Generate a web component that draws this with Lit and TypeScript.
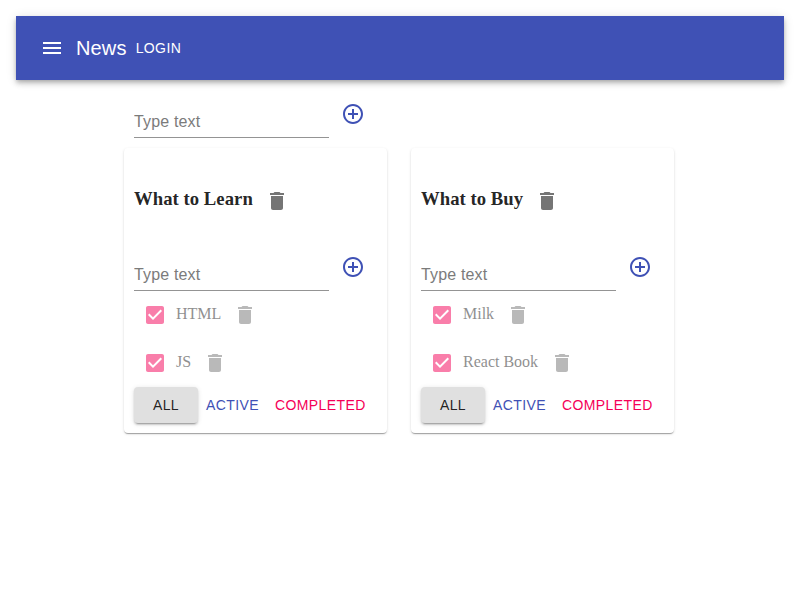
import { LitElement, html, css } from "lit";
import { customElement, property } from "lit/decorators.js";

const icon = (d: string) => html`<svg viewBox="0 0 24 24" aria-hidden="true"><path d=${d}></path></svg>`;
const MENU = "M3 18h18v-2H3v2zm0-5h18v-2H3v2zm0-7v2h18V6H3z";
const ADD = "M13 7h-2v4H7v2h4v4h2v-4h4v-2h-4V7zm-1-5C6.48 2 2 6.48 2 12s4.48 10 10 10 10-4.48 10-10S17.52 2 12 2zm0 18c-4.41 0-8-3.59-8-8s3.59-8 8-8 8 3.59 8 8-3.59 8-8 8z";
const TRASH = "M6 19c0 1.1.9 2 2 2h8c1.1 0 2-.9 2-2V7H6v12zM19 4h-3.5l-1-1h-5l-1 1H5v2h14V4z";
const CHECK = "M19 3H5c-1.11 0-2 .9-2 2v14c0 1.1.89 2 2 2h14c1.11 0 2-.9 2-2V5c0-1.1-.89-2-2-2zm-9 14l-5-5 1.41-1.41L10 14.17l7.59-7.59L19 8l-9 9z";

const shared = css`
  * { box-sizing: border-box; }
  svg { display: block; width: 24px; height: 24px; fill: currentColor; flex: none; }
  button { border: 0; margin: 0; background: none; color: inherit; font: inherit; padding: 0; cursor: pointer; }
`;

@customElement("add-item-form")
export class AddItemForm extends LitElement {
  static styles = [shared, css`
    :host { display: flex; height: 48px; }
    input {
      width: 195px; height: 48px; padding: 22px 0 6px; border: 0; border-bottom: 1px solid #949494;
      outline: 0; background: none; font: 16px/19px "Liberation Sans", Arial, sans-serif;
      letter-spacing: 0.15px; color: rgba(0, 0, 0, 0.87);
    }
    input::placeholder { color: #7b7b7b; opacity: 1; }
    button { width: 48px; height: 48px; padding: 12px; color: #3f51b5; }
  `];
  render() {
    return html`<input placeholder="Type text"><button aria-label="Add">${icon(ADD)}</button>`;
  }
}

@customElement("todo-list")
export class TodoList extends LitElement {
  @property() heading = "";
  @property({ attribute: false }) tasks: string[] = [];
  static styles = [shared, css`
    :host {
      display: block; box-sizing: border-box; width: 263px; height: 285px; padding: 10px; border-radius: 4px; background: #fff;
      box-shadow: 0 2px 1px -1px rgba(0,0,0,.2), 0 1px 1px 0 rgba(0,0,0,.14), 0 1px 3px 0 rgba(0,0,0,.12);
      font: 16px "Liberation Serif", "Times New Roman", serif;
    }
    h3 { display: flex; align-items: center; height: 48px; margin: 19px 0 18px; font-size: 18.72px; line-height: 22px; letter-spacing: .03px; color: rgba(0,0,0,.87); }
    h3 span { padding-bottom: 4px; }
    .remove { padding: 12px; color: #757575; }
    .task { display: flex; align-items: center; height: 48px; opacity: .5; color: #212121; }
    .task span { padding-bottom: 2px; }
    .check { padding: 9px; color: #f50057; }
    .filters { display: flex; height: 36px; font: 500 14px/24px "Liberation Sans", Arial, sans-serif; letter-spacing: .4px; }
    .filters button { padding: 6px 8px; min-width: 64px; border-radius: 4px; letter-spacing: inherit; color: #3f51b5; white-space: nowrap; }
    .filters .all {
      background: #e0e0e0; color: rgba(0,0,0,.87);
      box-shadow: 0 3px 1px -2px rgba(0,0,0,.2), 0 2px 2px 0 rgba(0,0,0,.14), 0 1px 5px 0 rgba(0,0,0,.12);
    }
    .filters .completed { color: #f50057; }
  `];
  render() {
    return html`
      <h3><span>${this.heading}</span><button class="remove" aria-label="Delete list">${icon(TRASH)}</button></h3>
      <add-item-form></add-item-form>
      <div>${this.tasks.map(t => html`<div class="task">
        <button class="check" role="checkbox" aria-checked="true" aria-label=${t}>${icon(CHECK)}</button>
        <span>${t}</span><button class="remove" aria-label="Delete task">${icon(TRASH)}</button></div>`)}</div>
      <div class="filters"><button class="all">ALL</button><button>ACTIVE</button><button class="completed">COMPLETED</button></div>`;
  }
}

@customElement("app-root")
export class AppRoot extends LitElement {
  static styles = [shared, css`
    :host { display: block; box-sizing: border-box; height: 600px; padding: 16px; background: #fff; }
    header {
      display: flex; align-items: center; height: 64px; padding: 0 24px; background: #3f51b5; color: #fff;
      font-family: "Liberation Sans", Arial, sans-serif;
      box-shadow: 0 2px 4px -1px rgba(0,0,0,.2), 0 4px 5px 0 rgba(0,0,0,.14), 0 1px 10px 0 rgba(0,0,0,.12);
    }
    .menu { margin-right: 12px; }
    h6 { margin: 0; font-size: 20px; font-weight: 500; line-height: 32px; letter-spacing: .15px; }
    .login { padding: 6px 8px 6px 9px; font-size: 14px; line-height: 24px; letter-spacing: .4px; }
    main { padding: 10px 0 0 108px; }
    .new { padding-left: 10px; }
    .lists { display: flex; gap: 24px; margin-top: 10px; }
  `];
  render() {
    return html`
      <header><button class="menu" aria-label="Menu">${icon(MENU)}</button><h6>News</h6><button class="login">LOGIN</button></header>
      <main>
        <add-item-form class="new"></add-item-form>
        <div class="lists">
          <todo-list heading="What to Learn" .tasks=${["HTML", "JS"]}></todo-list>
          <todo-list heading="What to Buy" .tasks=${["Milk", "React Book"]}></todo-list>
        </div>
      </main>`;
  }
}
